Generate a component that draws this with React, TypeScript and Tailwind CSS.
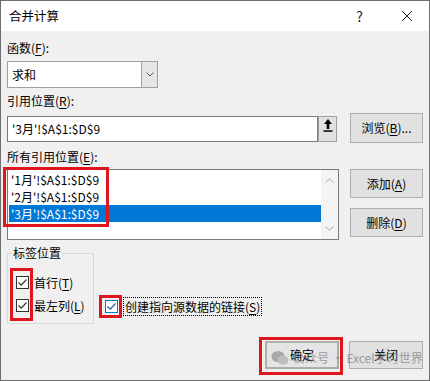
import type { ReactNode } from "react";

const font = { fontFamily: '"Noto Sans CJK SC", "Noto Sans", sans-serif' };

function U({ children }: { children: ReactNode }) {
  return <span className="underline underline-offset-2 decoration-1">{children}</span>;
}

function Button({ children, className = "" }: { children: ReactNode; className?: string }) {
  return (
    <div
      className={`flex items-center justify-center border border-[#adadad] bg-[#e1e1e1] text-[12px] leading-[16px] text-black ${className}`}
    >
      {children}
    </div>
  );
}

function Check({ blue = false }: { blue?: boolean }) {
  return (
    <div
      className={`flex h-[13px] w-[13px] shrink-0 items-center justify-center border bg-white ${
        blue ? "border-[#0078d7]" : "border-[#333333]"
      }`}
    >
      <svg width="11" height="11" viewBox="0 0 11 11">
        <polyline
          points="1.5,5.5 4.2,8.2 9.5,2.5"
          fill="none"
          stroke={blue ? "#1f5fa8" : "#333333"}
          strokeWidth="1.2"
        />
      </svg>
    </div>
  );
}

const refs = ["'1月'!$A$1:$D$9", "'2月'!$A$1:$D$9", "'3月'!$A$1:$D$9"];

export default function App() {
  return (
    <div
      style={font}
      className="relative h-[381px] w-[430px] overflow-hidden border border-[#6e6e6e] bg-[#f0f0f0] text-[12px] text-black"
    >
      {/* title bar */}
      <div className="flex h-[30px] items-center justify-between bg-white pl-[8px] pr-[16px]">
        <span className="text-[12.5px] leading-[16px]">合并计算</span>
        <div className="flex items-center">
          <span className="text-[14px] leading-[16px] text-[#222]">?</span>
          <svg className="ml-[38px]" width="12" height="12" viewBox="0 0 12 12">
            <path d="M1 1 L11 11 M11 1 L1 11" stroke="#222" strokeWidth="1" />
          </svg>
        </div>
      </div>

      <div className="pl-[6px] pr-[6px]">
        <div className="mt-[9px] h-[16px] leading-[16px]">
          函数(<U>F</U>):
        </div>

        {/* combobox */}
        <div className="mt-[5px] flex h-[27px] w-[151px] border border-[#a0a0a0] bg-white">
          <div className="flex flex-1 items-center pl-[4px] leading-[16px]">求和</div>
          <div className="flex w-[16px] items-center justify-center border-l border-[#a0a0a0] bg-[#e6e6e6]">
            <svg width="8" height="5" viewBox="0 0 8 5">
              <polyline points="0.5,0.5 4,4 7.5,0.5" fill="none" stroke="#555" strokeWidth="1" />
            </svg>
          </div>
        </div>

        <div className="mt-[5px] h-[16px] leading-[16px]">
          引用位置(<U>R</U>):
        </div>

        <div className="mt-[4px] flex items-start justify-between">
          <div className="mt-[3px] flex h-[26px]">
            <div className="flex w-[311px] items-center border border-[#7a7a7a] bg-white pl-[4px] leading-[16px]">
              '3月'!$A$1:$D$9
            </div>
            <div className="flex w-[19px] justify-center border border-[#a0a0a0] bg-[#e1e1e1] pt-[1px]">
              <svg width="10" height="14" viewBox="0 0 10 14">
                <path d="M5 1 L9 6 L6.3 6 L6.3 11 L3.7 11 L3.7 6 L1 6 Z" fill="#000" />
                <rect x="0.5" y="12.3" width="9" height="1.5" fill="#000" />
              </svg>
            </div>
          </div>
          <Button className="h-[30px] w-[73px]">
            浏览(<U>B</U>)...
          </Button>
        </div>

        <div className="mt-[6px] h-[16px] leading-[16px]">
          所有引用位置(<U>E</U>):
        </div>

        <div className="mt-[4px] flex items-start justify-between">
          <div className="flex h-[71px] w-[332px] border border-[#7a7a7a] bg-white">
            <div className="flex-1 pl-[1px] pt-[1px]">
              {refs.map((r, i) => (
                <div
                  key={r}
                  className={`h-[17px] pl-[2px] leading-[17px] ${
                    i === 2 ? "bg-[#0078d7] text-white" : ""
                  }`}
                >
                  {r}
                </div>
              ))}
            </div>
            <div className="flex w-[17px] flex-col items-center justify-between bg-[#f4f4f4] py-[8px]">
              <svg width="9" height="5" viewBox="0 0 9 5">
                <polyline points="0.5,4.5 4.5,0.8 8.5,4.5" fill="none" stroke="#a6a6a6" strokeWidth="1" />
              </svg>
              <svg width="9" height="5" viewBox="0 0 9 5">
                <polyline points="0.5,0.5 4.5,4.2 8.5,0.5" fill="none" stroke="#a6a6a6" strokeWidth="1" />
              </svg>
            </div>
          </div>
          <div className="flex w-[73px] flex-col gap-[10px]">
            <Button className="h-[29px]">
              添加(<U>A</U>)
            </Button>
            <Button className="h-[29px]">
              删除(<U>D</U>)
            </Button>
          </div>
        </div>

        <div className="mt-[6px] flex">
          <fieldset className="w-[87px] border border-[#d9d9d9] pb-[9px] pl-[4px]">
            <legend className="px-[1px] text-[12px] leading-[14px]">标签位置</legend>
            <div className="ml-[4px] mt-[14px] flex h-[17px] items-center gap-[5px] leading-[17px]">
              <Check />
              <span>
                首行(<U>T</U>)
              </span>
            </div>
            <div className="ml-[4px] mt-[6px] flex h-[17px] items-center gap-[5px] leading-[17px]">
              <Check />
              <span>
                最左列(<U>L</U>)
              </span>
            </div>
          </fieldset>
          <div className="mb-[8px] ml-[11px] flex h-[19px] items-center gap-[5px] self-end">
            <Check blue />
            <span className="flex h-[19px] items-center border border-dotted border-black px-[1px] leading-[17px]">
              创建指向源数据的链接(<U>S</U>)
            </span>
          </div>
        </div>

        <div className="mt-[17px] flex justify-end gap-[10px]">
          <Button className="h-[28px] w-[74px] border-2 border-[#0078d7] bg-[#e5e5e5]">确定</Button>
          <Button className="h-[28px] w-[74px]">关闭</Button>
        </div>
      </div>

      {/* watermark */}
      <div className="pointer-events-none absolute left-[270px] top-[349px] z-10 flex items-center gap-[4px] whitespace-nowrap text-[12px] leading-[16px] text-[#8a8a8a] opacity-80">
        <svg width="18" height="16" viewBox="0 0 18 16">
          <ellipse cx="7" cy="6.5" rx="6.5" ry="5.5" fill="#9a9a9a" />
          <ellipse cx="12" cy="10" rx="5.5" ry="4.5" fill="#b5b5b5" />
        </svg>
        <span>公众号 · Excel学习世界</span>
      </div>

      {/* red annotation boxes */}
      <div className="pointer-events-none absolute left-[2px] top-[166px] h-[60px] w-[106px] border-[3px] border-[#e0161e]" />
      <div className="pointer-events-none absolute left-[9px] top-[267px] h-[53px] w-[23px] border-[3px] border-[#e0161e]" />
      <div className="pointer-events-none absolute left-[98px] top-[294px] h-[23px] w-[23px] border-[3px] border-[#e0161e]" />
      <div className="pointer-events-none absolute left-[258px] top-[336px] h-[38px] w-[84px] border-[3px] border-[#e0161e]" />
    </div>
  );
}
